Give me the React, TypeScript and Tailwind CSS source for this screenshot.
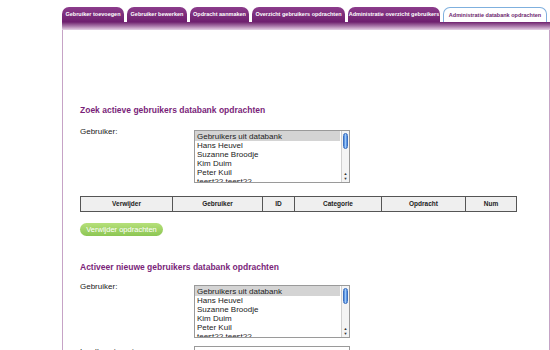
import React from 'react';

const tabs = [
  { label: 'Gebruiker toevoegen', w: 'w-[62px]' },
  { label: 'Gebruiker bewerken', w: 'w-[60px]' },
  { label: 'Opdracht aanmaken', w: 'w-[59px]' },
  { label: 'Overzicht gebruikers opdrachten', w: 'w-[93px]' },
  { label: 'Administratie overzicht gebruikers', w: 'w-[92px]' },
];

const users = ['Gebruikers uit databank', 'Hans Heuvel', 'Suzanne Broodje', 'Kim Duim', 'Peter Kuil', 'teest?? teest??'];

function UserList() {
  return (
    <div className="relative mt-[3px] w-[156px] h-[53px] border border-[#9a9a9a] bg-white overflow-hidden">
      <div className="pr-[9px] text-[8px] leading-[9px] text-[#222]">
        {users.map((u, i) => (
          <div key={u} className={i === 0 ? 'bg-[#d4d4d4] px-[2px] pt-[1px]' : 'px-[2px]'}>
            {u}
          </div>
        ))}
      </div>
      {/* scrollbar */}
      <div className="absolute right-0 top-0 bottom-0 w-[8px] border-l border-[#d0d0d0] bg-[#f4f4f4] flex flex-col items-center">
        <div className="mt-[2px] w-[5px] h-[16px] rounded-full bg-gradient-to-r from-[#3f7fd8] via-[#9cc6f5] to-[#3f7fd8] border border-[#3b6fc0]" />
        <div className="flex-1" />
        <div className="text-[4px] leading-[5px] text-[#333]">▲</div>
        <div className="text-[4px] leading-[5px] text-[#333] mb-[1px]">▼</div>
      </div>
    </div>
  );
}

export default function App() {
  return (
    <div className="w-[550px] h-[350px] overflow-hidden bg-white pl-[62px] pt-[7px]" style={{ fontFamily: '"Liberation Sans", Arial, sans-serif' }}>
      {/* Tabs */}
      <div className="flex items-end gap-[3px] h-[15px]">
        {tabs.map(t => (
          <div
            key={t.label}
            className={`${t.w} h-[15px] rounded-t-[7px] bg-gradient-to-b from-[#8c3c8c] to-[#6e1f6e] text-white text-[5.5px] font-bold flex items-center justify-center whitespace-nowrap`}
          >
            {t.label}
          </div>
        ))}
        <div className="w-[104px] h-[15px] rounded-t-[7px] bg-white border border-[#7fb0de] border-b-0 text-[#6e1f6e] text-[5.5px] font-bold flex items-center justify-center whitespace-nowrap">
          Administratie databank opdrachten
        </div>
      </div>
      {/* Purple band */}
      <div className="h-[8px] bg-gradient-to-b from-[#6e1f6e] via-[#a775a7] to-[#e6d4e6]" />

      {/* Panel */}
      <div className="h-[320px] border-l border-r border-[#c6a3c6] pl-[17px] pt-[75px] text-[#222]">
        <h2 className="text-[8.5px] leading-[10px] font-bold text-[#7a1f7a]">Zoek actieve gebruikers databank opdrachten</h2>

        <div className="flex mt-[12px]">
          <div className="w-[114px] text-[8px] leading-[10px]">Gebruiker:</div>
          <UserList />
        </div>

        <table className="mt-[13px] w-[437px] border-collapse border border-[#b08ab0] text-[6.5px] font-bold">
          <thead>
            <tr className="bg-[#efefef] h-[15px]">
              <th className="w-[92px] border border-[#555]">Verwijder</th>
              <th className="w-[90px] border border-[#555]">Gebruiker</th>
              <th className="w-[32px] border border-[#555]">ID</th>
              <th className="w-[87px] border border-[#555]">Categorie</th>
              <th className="w-[84px] border border-[#555]">Opdracht</th>
              <th className="border border-[#555]">Num</th>
            </tr>
          </thead>
        </table>

        <button className="mt-[11px] w-[83px] h-[13px] rounded-full bg-gradient-to-b from-[#b6e07a] to-[#8cc653] text-white text-[7.5px] leading-[13px] text-center">
          Verwijder opdrachten
        </button>

        <h2 className="mt-[23px] text-[8.5px] leading-[10px] font-bold text-[#7a1f7a]">Activeer nieuwe gebruikers databank opdrachten</h2>

        <div className="flex mt-[10px]">
          <div className="w-[114px] text-[8px] leading-[10px]">Gebruiker:</div>
          <UserList />
        </div>

        <div className="flex mt-[8px]">
          <div className="w-[114px] text-[8px]">Inzulle categorie:</div>
          <div className="w-[156px] h-[12px] border border-[#9a9a9a] text-[8px] px-[2px]">Categorie aanmaken</div>
        </div>
      </div>
    </div>
  );
}
